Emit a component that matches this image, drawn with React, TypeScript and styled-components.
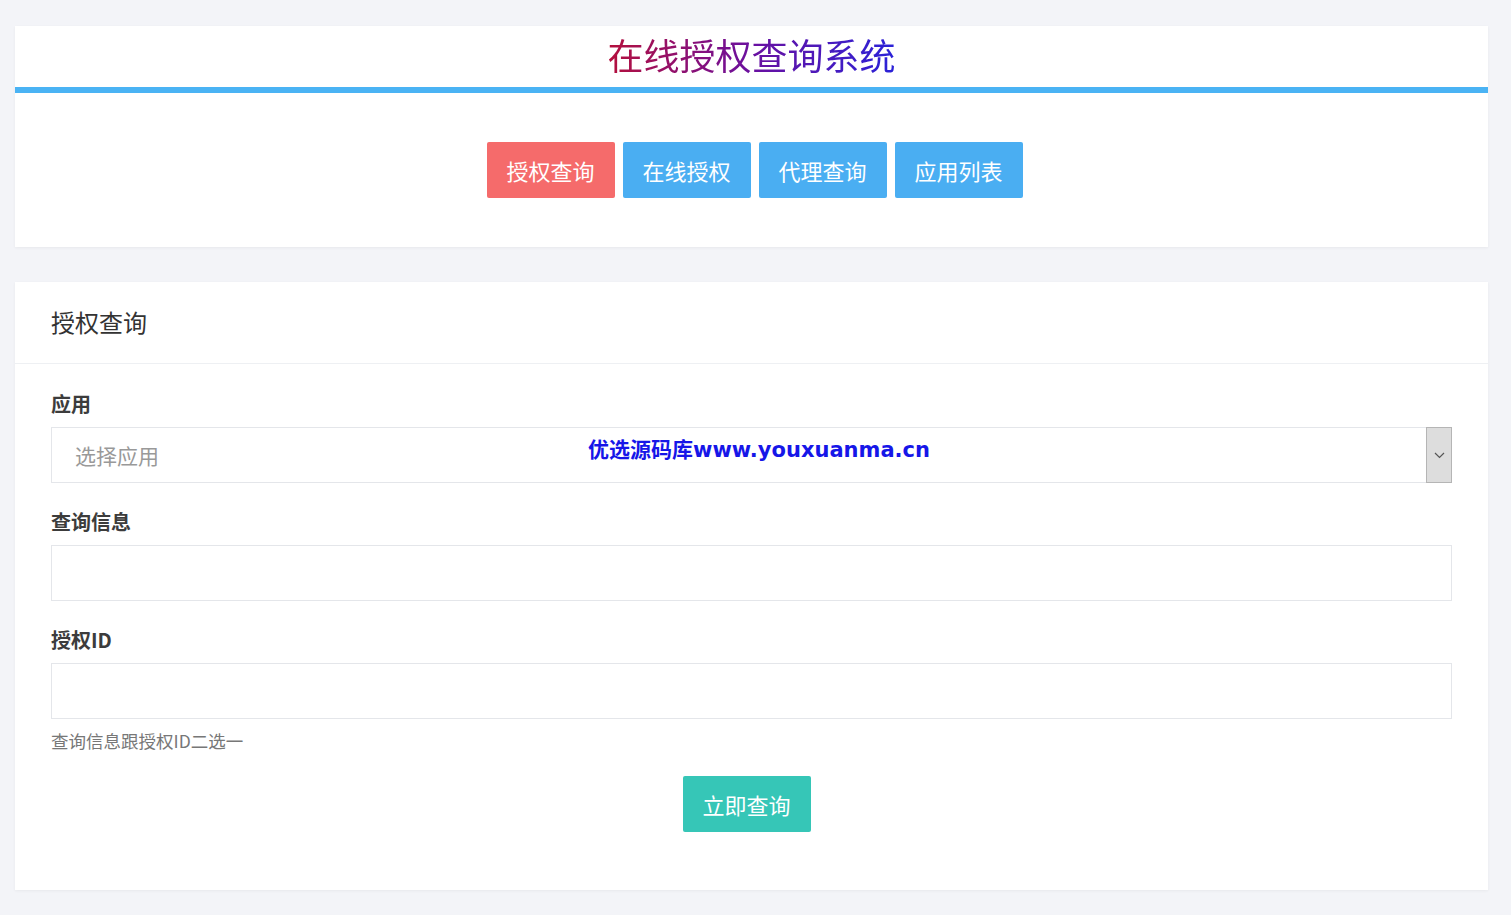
import React from 'react';
import styled, { createGlobalStyle } from 'styled-components';

const GlobalStyle = createGlobalStyle`
  html, body {
    margin: 0;
    padding: 0;
    background: #f3f4f8;
    font-family: 'Microsoft YaHei', 'Noto Sans CJK SC', 'Noto Sans', sans-serif;
    color: #333;
  }
  * { box-sizing: border-box; }
`;

const Page = styled.div`
  position: relative;
  width: 1511px;
  min-height: 915px;
  padding: 26px 23px 25px 15px;
  display: flex;
  flex-direction: column;
  gap: 35px;
`;

const Card = styled.div`
  background: #fff;
  box-shadow: 0 1px 3px rgba(0, 0, 0, 0.05);
`;

const TitleBar = styled.div`
  height: 61px;
  display: flex;
  align-items: center;
  justify-content: center;
  border-bottom: 6px solid #4ab3f4;
  box-sizing: content-box;
`;

const Title = styled.h1`
  margin: 0;
  font-size: 36px;
  font-weight: 400;
  line-height: 1;
  padding-bottom: 5px;
  background: linear-gradient(90deg, #b5103c 0%, #6a10a0 50%, #2a22d8 100%);
  -webkit-background-clip: text;
  background-clip: text;
  color: transparent;
`;

const NavRow = styled.div`
  display: flex;
  justify-content: center;
  gap: 8px;
  padding: 49px 0 49px 6px;
`;

const NavButton = styled.button<{ $active?: boolean }>`
  width: 128px;
  height: 56px;
  border: none;
  border-radius: 2px;
  background: ${(p) => (p.$active ? '#f56b6b' : '#4aaef2')};
  color: #fff;
  font-family: inherit;
  font-size: 22px;
  cursor: pointer;
`;

const PanelHeader = styled.div`
  height: 82px;
  padding: 0 36px 2px;
  display: flex;
  align-items: center;
  font-size: 24px;
  color: #333;
  border-bottom: 1px solid #eef0f3;
`;

const PanelBody = styled.div`
  padding: 28px 36px 58px 36px;
  display: flex;
  flex-direction: column;
`;

const Field = styled.div<{ $last?: boolean }>`
  display: flex;
  flex-direction: column;
  margin-bottom: ${(p) => (p.$last ? '10px' : '27px')};
`;

const Label = styled.label`
  font-size: 20px;
  font-weight: 700;
  line-height: 24px;
  color: #3c3c3c;
  margin-bottom: 11px;
`;

const SelectBox = styled.div`
  height: 56px;
  border: 1px solid #e4e6ea;
  display: flex;
  align-items: stretch;
`;

const Placeholder = styled.div`
  flex: 1;
  display: flex;
  align-items: center;
  padding-left: 23px;
  font-size: 21px;
  color: #999;
`;

const Arrow = styled.div`
  width: 26px;
  background: #dddddd;
  border: 1px solid #b5b5b5;
  margin: -1px -1px -1px 0;
  display: flex;
  align-items: center;
  justify-content: center;
`;

const Input = styled.input`
  height: 56px;
  border: 1px solid #e4e6ea;
  outline: none;
  padding: 0 23px;
  font-size: 20px;
  font-family: inherit;
`;

const Help = styled.div`
  font-size: 17.5px;
  color: #777;
  line-height: 24px;
`;

const SubmitRow = styled.div`
  display: flex;
  justify-content: center;
  margin-top: 23px;
  padding-right: 10px;
`;

const Submit = styled.button`
  width: 128px;
  height: 56px;
  border: none;
  border-radius: 2px;
  background: #36c6b7;
  color: #fff;
  font-size: 22px;
  font-family: inherit;
  cursor: pointer;
`;

const Watermark = styled.div`
  position: absolute;
  left: 588px;
  top: 436px;
  font-family: 'DejaVu Sans', 'Noto Sans CJK SC', sans-serif;
  font-size: 21px;
  font-weight: 700;
  line-height: 28px;
  color: #1616e8;
  pointer-events: none;
`;

const App: React.FC = () => (
  <>
    <GlobalStyle />
    <Page>
      <Card>
        <TitleBar>
          <Title>在线授权查询系统</Title>
        </TitleBar>
        <NavRow>
          <NavButton $active>授权查询</NavButton>
          <NavButton>在线授权</NavButton>
          <NavButton>代理查询</NavButton>
          <NavButton>应用列表</NavButton>
        </NavRow>
      </Card>
      <Card>
        <PanelHeader>授权查询</PanelHeader>
        <PanelBody>
          <Field>
            <Label>应用</Label>
            <SelectBox>
              <Placeholder>选择应用</Placeholder>
              <Arrow>
                <svg width="11" height="7" viewBox="0 0 11 7">
                  <path d="M1 1 L5.5 5.5 L10 1" fill="none" stroke="#555" strokeWidth="1.2" />
                </svg>
              </Arrow>
            </SelectBox>
          </Field>
          <Field>
            <Label>查询信息</Label>
            <Input />
          </Field>
          <Field $last>
            <Label>授权ID</Label>
            <Input />
          </Field>
          <Help>查询信息跟授权ID二选一</Help>
          <SubmitRow>
            <Submit>立即查询</Submit>
          </SubmitRow>
        </PanelBody>
      </Card>
      <Watermark>优选源码库www.youxuanma.cn</Watermark>
    </Page>
  </>
);

export default App;
